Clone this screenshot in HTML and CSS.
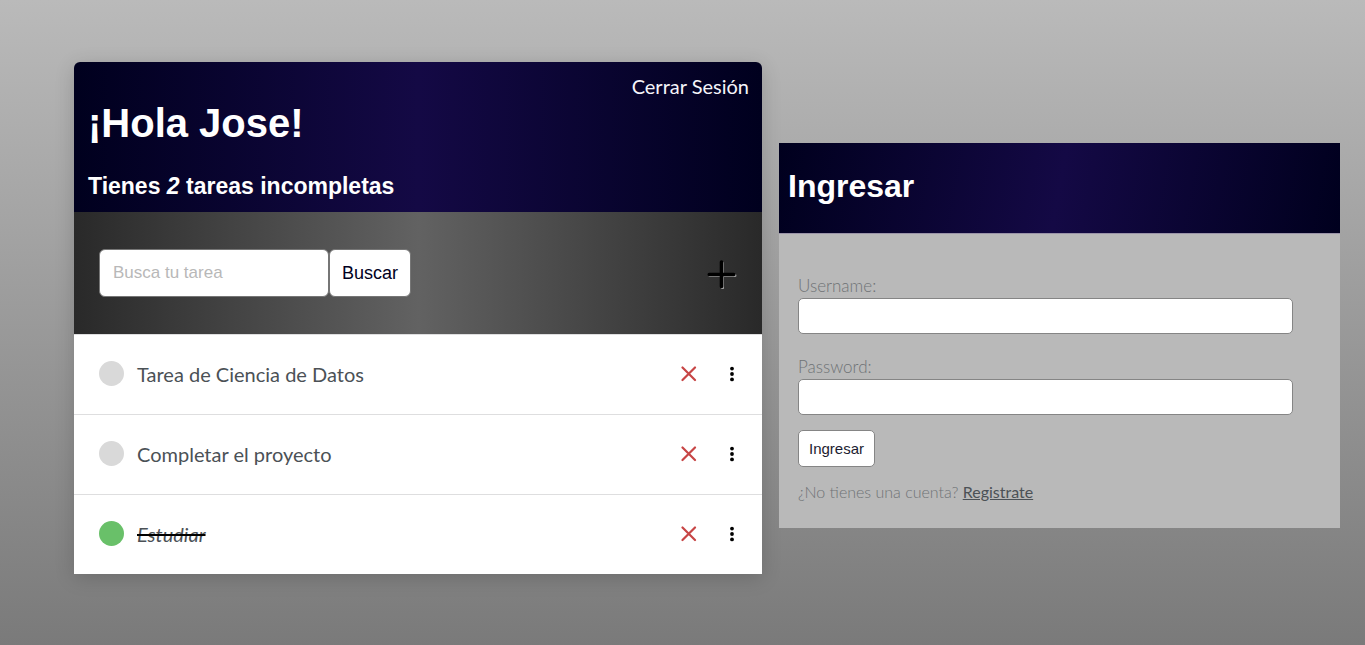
FILE: index.html
```html
<!DOCTYPE html>
<html lang="es">
<head>
<meta charset="utf-8">
<meta name="viewport" content="width=device-width, initial-scale=1">
<title>Lista de tareas</title>
<link rel="stylesheet" href="styles.css">
</head>
<body>
<svg class="sprite" aria-hidden="true">
  <symbol id="cross" viewBox="0 0 16 16"><path d="M1.500 1.500L14 14M14 1.500L1.500 14" stroke="#c74545" stroke-width="2.200" stroke-linecap="round"/></symbol>
  <symbol id="dots" viewBox="0 0 16 16"><circle cx="8" cy="2.600" r="1.900"/><circle cx="8" cy="8" r="1.900"/><circle cx="8" cy="13.400" r="1.900"/></symbol>
</svg>
<main class="page">
  <section class="tasks">
    <header class="tasks-header">
      <a class="logout" href="#">Cerrar Sesión</a>
      <h1 class="greeting">¡Hola Jose!</h1>
      <h2 class="summary">Tienes <em>2</em> tareas incompletas</h2>
    </header>
    <div class="toolbar">
      <form class="search">
        <input class="search-input" type="text" placeholder="Busca tu tarea" aria-label="Busca tu tarea">
        <button class="search-button" type="button">Buscar</button>
      </form>
      <a class="add" href="#" aria-label="Agregar tarea">
        <svg class="add-icon" viewBox="0 0 32 32"><path d="M17.500 6V31M5 18.500H30" stroke="#9c9c9c" stroke-width="3" stroke-linecap="round"/><path d="M16.500 5V29.500M4.300 17.500H28.700" stroke="#000" stroke-width="3.600" stroke-linecap="round"/></svg>
      </a>
    </div>
    <ul class="list">
      <li class="task">
        <span class="status"></span>
        <a class="title" href="#">Tarea de Ciencia de Datos</a>
        <a class="action" href="#" aria-label="Eliminar"><svg class="icon"><use href="#cross"/></svg></a>
        <a class="action" href="#" aria-label="Opciones"><svg class="icon"><use href="#dots"/></svg></a>
      </li>
      <li class="task">
        <span class="status"></span>
        <a class="title" href="#">Completar el proyecto</a>
        <a class="action" href="#" aria-label="Eliminar"><svg class="icon"><use href="#cross"/></svg></a>
        <a class="action" href="#" aria-label="Opciones"><svg class="icon"><use href="#dots"/></svg></a>
      </li>
      <li class="task">
        <span class="status status-done"></span>
        <a class="title title-done" href="#">Estudiar</a>
        <a class="action" href="#" aria-label="Eliminar"><svg class="icon"><use href="#cross"/></svg></a>
        <a class="action" href="#" aria-label="Opciones"><svg class="icon"><use href="#dots"/></svg></a>
      </li>
    </ul>
  </section>
  <section class="login">
    <header class="login-header"><h1 class="login-title">Ingresar</h1></header>
    <form class="login-form">
      <div class="field">
        <label class="label" for="username">Username:</label>
        <input class="input" id="username" type="text">
      </div>
      <div class="field">
        <label class="label" for="password">Password:</label>
        <input class="input" id="password" type="password">
      </div>
      <button class="submit" type="button">Ingresar</button>
      <p class="register">¿No tienes una cuenta? <a class="register-link" href="#">Registrate</a></p>
    </form>
  </section>
</main>
</body>
</html>
```
FILE: styles.css
```css
* {
  box-sizing: border-box;
}

body {
  margin: 0;
  min-height: 100vh;
  background: linear-gradient(#bababa, #7a7a7a);
  font-family: Lato, sans-serif;
  color: #4b5156;
}

h1, h2, p, ul {
  margin: 0;
  padding: 0;
}

.sprite {
  display: none;
}

.page {
  display: grid;
  grid-template-columns: 688fr 561fr;
  align-items: start;
  gap: 17px;
  padding: 62px 25px 62px 74px;
}

.tasks {
  border-radius: 6px 6px 0 0;
  box-shadow: 0 4px 20px rgba(0, 0, 0, 0.16);
}

.tasks-header {
  display: flex;
  flex-direction: column;
  padding: 12px 13px 10px 14px;
  border-radius: 6px 6px 0 0;
  background: linear-gradient(to right, #00001e, #140945, #00001e);
  color: #fff;
  font-family: "Liberation Sans", Arial, sans-serif;
}

.logout {
  align-self: flex-end;
  color: #f5f5fa;
  font: 20px/24px Lato, sans-serif;
  text-decoration: none;
}

.greeting {
  font-size: 40px;
  line-height: 50px;
}

.summary {
  margin-top: 22px;
  font-size: 23px;
  line-height: 32px;
}

.toolbar {
  display: flex;
  align-items: center;
  justify-content: space-between;
  padding: 37px 25px;
  background: linear-gradient(to right, #292929, #626262, #292929);
}

.search {
  display: flex;
}

.search-input,
.search-button {
  height: 48px;
  border: 1px solid #767676;
  border-radius: 6px;
  background: #fff;
  font-family: "Liberation Sans", Arial, sans-serif;
}

.search-input {
  width: 230px;
  padding: 0 13px;
  font-size: 17px;
}

.search-input::placeholder {
  color: #b8b8b8;
}

.search-button {
  padding: 0 12px;
  color: #00001e;
  font-size: 18px;
}

.add,
.action {
  display: flex;
}

.add-icon {
  width: 32px;
  height: 32px;
}

.list {
  background: #fff;
  list-style: none;
}

.task {
  display: flex;
  align-items: center;
  gap: 13px;
  height: 80px;
  padding: 0 22px 2px 25px;
  border-top: 1px solid #dededf;
}

.status {
  width: 25px;
  height: 25px;
  border-radius: 50%;
  background: #d9d9d9;
}

.status-done {
  background: #69c069;
}

.title {
  margin-right: auto;
  color: #4b5156;
  font-size: 20px;
  line-height: 28px;
  text-decoration: none;
}

.title-done {
  font-style: italic;
  text-decoration: line-through #000 2px;
}

.action + .action {
  margin-left: 14px;
}

.icon {
  width: 16px;
  height: 16px;
}

.login {
  margin-top: 81px;
  background: #b9b9b9;
}

.login-header {
  padding: 24px 9px 28px;
  background: linear-gradient(100deg, #00001e, #140945, #00001e);
  border-bottom: 1px solid #9a93a8;
}

.login-title {
  color: #fff;
  font: bold 32px/38px "Liberation Sans", Arial, sans-serif;
}

.login-form {
  padding: 42px 47px 24px 19px;
}

.field {
  margin-bottom: 23px;
}

.field + .field {
  margin-bottom: 15px;
}

.label {
  display: block;
  padding-bottom: 2px;
  color: #6f7376;
  font-size: 17px;
  font-weight: 300;
  line-height: 20px;
}

.input,
.submit {
  display: block;
  height: 36px;
  border: 1px solid #858585;
  border-radius: 5px;
  background: #fff;
}

.input {
  width: 100%;
  padding: 0 10px;
}

.submit {
  height: 37px;
  padding: 0 10px;
  color: #1c1c30;
  font: 15px "Liberation Sans", Arial, sans-serif;
}

.register {
  margin-top: 13px;
  color: #6f7376;
  font-size: 16px;
  font-weight: 300;
  line-height: 24px;
}

.register-link {
  color: #4b5156;
  font-weight: 400;
}
```
